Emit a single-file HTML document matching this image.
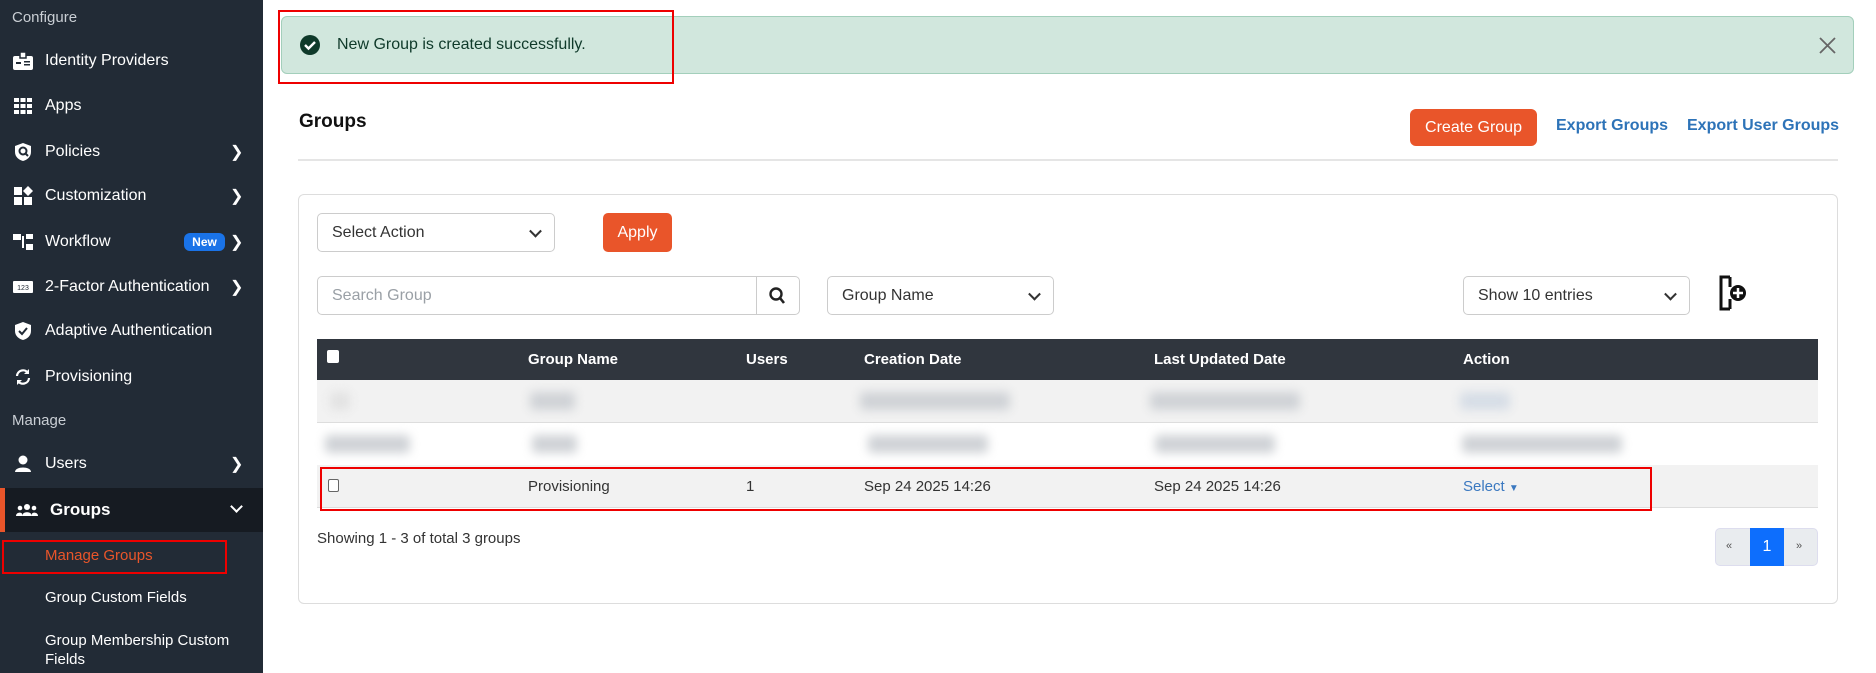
<!DOCTYPE html>
<html><head><meta charset="utf-8"><style>
*{box-sizing:border-box;margin:0;padding:0}
body{width:1876px;height:673px;overflow:hidden;font-family:"Liberation Sans",sans-serif;background:#fff;position:relative}
.sb{position:absolute;left:0;top:0;width:263px;height:673px;background:#222b36;color:#fff}
.sb .it{position:absolute;left:45px;font-size:16px;line-height:20px;white-space:nowrap}
.sb .sec{position:absolute;left:12px;font-size:15px;color:#c9ced4}
.sb .ic{position:absolute;left:12px;width:22px;height:20px}
.sb .chev{position:absolute;left:230px;font-size:16px}
.a{position:absolute}
.in{position:absolute;border:1px solid #ccc;border-radius:5px;background:#fff;font-size:16px;color:#333;padding-left:14px;display:flex;align-items:center}
.dd{position:absolute;right:14px;top:50%;width:9px;height:9px;border-right:2px solid #333;border-bottom:2px solid #333;transform:translateY(-70%) rotate(45deg)}
.th{position:absolute;top:351px;color:#fff;font-weight:bold;font-size:15px}
.td{position:absolute;top:478px;color:#333;font-size:15px}
.blur{position:absolute;background:#cfd2d6;filter:blur(5px);height:18px;border-radius:4px}
</style></head><body>
<div class="sb">
<div class="sec" style="top:9px">Configure</div>
<svg class="ic" style="top:51px" viewBox="0 0 22 20"><rect x="1" y="5" width="20" height="14" rx="2" fill="#fff"/><rect x="8" y="1" width="6" height="6" fill="#fff" stroke="#222b36" stroke-width="1.5"/><rect x="4" y="11" width="5" height="2" fill="#222b36"/><rect x="12" y="10" width="6" height="1.5" fill="#222b36"/><rect x="12" y="13" width="6" height="1.5" fill="#222b36"/></svg>
<div class="it" style="top:51px">Identity Providers</div>
<svg class="ic" style="top:96px" viewBox="0 0 22 20"><g fill="#fff"><rect x="2" y="2" width="5" height="4"/><rect x="8.5" y="2" width="5" height="4"/><rect x="15" y="2" width="5" height="4"/><rect x="2" y="8" width="5" height="4"/><rect x="8.5" y="8" width="5" height="4"/><rect x="15" y="8" width="5" height="4"/><rect x="2" y="14" width="5" height="4"/><rect x="8.5" y="14" width="5" height="4"/><rect x="15" y="14" width="5" height="4"/></g></svg>
<div class="it" style="top:96px">Apps</div>
<svg class="ic" style="top:142px" viewBox="0 0 22 20"><path d="M11 1 L19 4 V10 C19 15 15 18 11 19 C7 18 3 15 3 10 V4Z" fill="#fff"/><circle cx="11" cy="9" r="3.5" fill="none" stroke="#222b36" stroke-width="2"/><path d="M13 11 L16 14" stroke="#222b36" stroke-width="2"/></svg>
<div class="it" style="top:142px">Policies</div><div class="chev" style="top:142px">❯</div>
<svg class="ic" style="top:186px" viewBox="0 0 22 20"><g fill="#fff"><rect x="2" y="1" width="8" height="8"/><rect x="2" y="11" width="8" height="8"/><rect x="12" y="11" width="8" height="8"/><path d="M16 0 L21 5 L16 10 L11 5Z"/></g></svg>
<div class="it" style="top:186px">Customization</div><div class="chev" style="top:186px">❯</div>
<svg class="ic" style="top:232px" viewBox="0 0 22 20"><g fill="#fff"><rect x="1" y="2" width="8" height="6"/><rect x="14" y="2" width="7" height="5"/><rect x="14" y="12" width="7" height="6"/><rect x="10" y="4" width="2" height="12"/></g></svg>
<div class="it" style="top:232px">Workflow</div>
<div class="a" style="left:184px;top:233px;width:41px;height:18px;background:#1a73e8;border-radius:6px;font-size:12px;font-weight:bold;text-align:center;line-height:18px">New</div><div class="chev" style="top:232px">❯</div>
<svg class="ic" style="top:277px" viewBox="0 0 22 20"><rect x="1" y="4" width="20" height="12" rx="1" fill="#fff"/><text x="11" y="13" font-size="7" text-anchor="middle" fill="#222b36" font-family="Liberation Sans">123</text></svg>
<div class="it" style="top:277px">2-Factor Authentication</div><div class="chev" style="top:277px">❯</div>
<svg class="ic" style="top:321px" viewBox="0 0 22 20"><path d="M11 1 L19 4 V10 C19 15 15 18 11 19 C7 18 3 15 3 10 V4Z" fill="#fff"/><path d="M7 10 L10 13 L15 7" fill="none" stroke="#222b36" stroke-width="2"/></svg>
<div class="it" style="top:321px">Adaptive Authentication</div>
<svg class="ic" style="top:367px" viewBox="0 0 22 20"><path d="M5 9 A6 6 0 0 1 16 6 M17 11 A6 6 0 0 1 6 14" fill="none" stroke="#fff" stroke-width="2.2"/><path d="M17 2 V7 H12Z M5 18 V13 H10Z" fill="#fff"/></svg>
<div class="it" style="top:367px">Provisioning</div>
<div class="sec" style="top:412px">Manage</div>
<svg class="ic" style="top:454px" viewBox="0 0 22 20"><circle cx="11" cy="6" r="4.5" fill="#fff"/><path d="M3 18 C3 12 19 12 19 18Z" fill="#fff"/></svg>
<div class="it" style="top:454px">Users</div><div class="chev" style="top:454px">❯</div>
<div class="a" style="left:0;top:488px;width:263px;height:44px;background:#161b22;border-left:5px solid #e9552a"></div>
<svg class="ic" style="top:500px;left:16px" viewBox="0 0 22 20"><g fill="#fff"><circle cx="11" cy="7" r="3"/><circle cx="4" cy="8" r="2.3"/><circle cx="18" cy="8" r="2.3"/><path d="M6 16 C6 11 16 11 16 16Z"/><path d="M0 16 C0 12 6 12 6 14V16Z"/><path d="M22 16 C22 12 16 12 16 14V16Z"/></g></svg>
<div class="it" style="top:500px;left:50px;font-weight:bold;font-size:17px">Groups</div>
<div class="a" style="left:232px;top:502px;width:9px;height:9px;border-right:2px solid #fff;border-bottom:2px solid #fff;transform:rotate(45deg)"></div>
<div class="a" style="left:2px;top:540px;width:225px;height:34px;border:2px solid #e00"></div>
<div class="it" style="top:546px;color:#e9552a;font-size:15px">Manage Groups</div>
<div class="it" style="top:588px;font-size:15px">Group Custom Fields</div>
<div class="it" style="top:631px;font-size:15px">Group Membership Custom</div>
<div class="it" style="top:650px;font-size:15px">Fields</div>
</div>

<div class="a" style="left:281px;top:16px;width:1573px;height:58px;background:#d1e7dd;border:1px solid #a3cfbb;border-radius:6px"></div>
<div class="a" style="left:278px;top:10px;width:396px;height:74px;border:2px solid #e00"></div>
<svg class="a" style="left:299px;top:34px" width="22" height="22" viewBox="0 0 22 22"><circle cx="11" cy="11" r="10" fill="#0f3a2a"/><path d="M6 11 L9.5 14.5 L16 8" fill="none" stroke="#fff" stroke-width="2.4"/></svg>
<div class="a" style="left:337px;top:36px;font-size:16px;color:#0f3a2a">New Group is created successfully.</div>
<svg class="a" style="left:1819px;top:37px" width="17" height="17"><path d="M1 1L16 16M16 1L1 16" stroke="#666" stroke-width="1.8"/></svg>

<div class="a" style="left:299px;top:111px;font-size:19px;font-weight:bold;color:#111">Groups</div>
<div class="a" style="left:1410px;top:109px;width:127px;height:37px;background:#e9552a;border-radius:6px;color:#fff;font-size:16px;text-align:center;line-height:37px">Create Group</div>
<div class="a" style="left:1556px;top:117px;font-size:16px;color:#2d73b8;font-weight:bold">Export Groups</div>
<div class="a" style="left:1687px;top:117px;font-size:16px;color:#2d73b8;font-weight:bold">Export User Groups</div>
<div class="a" style="left:298px;top:159px;width:1540px;height:2px;background:#e5e5e5"></div>

<div class="a" style="left:298px;top:194px;width:1540px;height:410px;border:1px solid #ddd;border-radius:6px"></div>
<div class="in" style="left:317px;top:213px;width:238px;height:39px">Select Action<span class="dd"></span></div>
<div class="a" style="left:603px;top:213px;width:69px;height:39px;background:#e9552a;border-radius:5px;color:#fff;font-size:16px;text-align:center;line-height:39px">Apply</div>
<div class="in" style="left:317px;top:276px;width:483px;height:39px;color:#9aa0a6">Search Group</div>
<div class="a" style="left:756px;top:276px;width:44px;height:39px;border-left:1px solid #ccc"></div>
<svg class="a" style="left:768px;top:286px" width="18" height="19"><circle cx="8" cy="8" r="5.5" fill="none" stroke="#222" stroke-width="2.4"/><path d="M12 12L16 17" stroke="#222" stroke-width="2.6"/></svg>
<div class="in" style="left:827px;top:276px;width:227px;height:39px">Group Name<span class="dd"></span></div>
<div class="in" style="left:1463px;top:276px;width:227px;height:39px">Show 10 entries<span class="dd"></span></div>
<svg class="a" style="left:1718px;top:275px" width="32" height="36" viewBox="0 0 32 36"><path d="M12 2 H3 V34 H12" fill="none" stroke="#111" stroke-width="3"/><path d="M12 2 V12 M12 24 V34" stroke="#111" stroke-width="3"/><circle cx="20" cy="18" r="8" fill="#111"/><path d="M20 13V23M15 18H25" stroke="#fff" stroke-width="2.5"/></svg>

<div class="a" style="left:317px;top:339px;width:1501px;height:41px;background:#30363e"></div>
<div class="a" style="left:327px;top:350px;width:12px;height:13px;background:#fff;border-radius:2px"></div>
<div class="th" style="left:528px">Group Name</div>
<div class="th" style="left:746px">Users</div>
<div class="th" style="left:864px">Creation Date</div>
<div class="th" style="left:1154px">Last Updated Date</div>
<div class="th" style="left:1463px">Action</div>
<div class="a" style="left:317px;top:380px;width:1501px;height:43px;background:#f2f2f2;border-bottom:1px solid #ddd"></div>
<div class="a" style="left:317px;top:423px;width:1501px;height:43px;background:#fff;border-bottom:1px solid #ddd"></div>
<div class="a" style="left:317px;top:465px;width:1501px;height:43px;background:#f2f2f2;border-bottom:1px solid #ddd"></div>
<div class="blur" style="left:330px;top:392px;width:20px;background:#e2e2e2"></div>
<div class="blur" style="left:530px;top:392px;width:45px"></div>
<div class="blur" style="left:860px;top:392px;width:150px"></div>
<div class="blur" style="left:1150px;top:392px;width:150px"></div>
<div class="blur" style="left:1460px;top:392px;width:50px;background:#d6dde6"></div>
<div class="blur" style="left:325px;top:435px;width:85px"></div>
<div class="blur" style="left:532px;top:435px;width:45px"></div>
<div class="blur" style="left:868px;top:435px;width:120px"></div>
<div class="blur" style="left:1155px;top:435px;width:120px"></div>
<div class="blur" style="left:1462px;top:435px;width:160px"></div>
<div class="a" style="left:328px;top:479px;width:11px;height:13px;border:1px solid #666;border-radius:2px;background:#fff"></div>
<div class="td" style="left:528px">Provisioning</div>
<div class="td" style="left:746px">1</div>
<div class="td" style="left:864px">Sep 24 2025 14:26</div>
<div class="td" style="left:1154px">Sep 24 2025 14:26</div>
<div class="td" style="left:1463px;color:#3a78c0">Select <span style="font-size:10px">▼</span></div>
<div class="a" style="left:320px;top:467px;width:1332px;height:44px;border:2px solid #e00"></div>
<div class="a" style="left:317px;top:530px;font-size:15px;color:#333">Showing 1 - 3 of total 3 groups</div>
<div class="a" style="left:1715px;top:528px;width:103px;height:38px;background:#e9ecef;border:1px solid #dde;border-radius:5px"></div>
<div class="a" style="left:1750px;top:528px;width:34px;height:38px;background:#0d6efd;color:#fff;font-size:16px;text-align:center;line-height:38px">1</div>
<div class="a" style="left:1726px;top:540px;font-size:11px;color:#555">«</div>
<div class="a" style="left:1796px;top:540px;font-size:11px;color:#555">»</div>
</body></html>
